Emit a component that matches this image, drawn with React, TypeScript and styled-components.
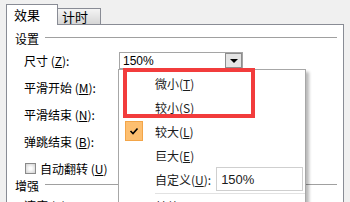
import React from 'react';
import styled, { createGlobalStyle } from 'styled-components';

const GlobalStyle = createGlobalStyle`
  html, body { margin: 0; padding: 0; background: #f0f0f0; }
  * { box-sizing: border-box; }
  body { font-family: "Noto Sans CJK SC", "Liberation Sans", sans-serif; }
`;

const Page = styled.div`
  position: relative;
  width: 350px;
  height: 202px;
  overflow: hidden;
  background: #f0f0f0;
  padding: 4px 6px 0 6px;
  display: flex;
  flex-direction: column;
  font-size: 12px;
  color: #000;
`;

const TabStrip = styled.div`
  display: flex;
  align-items: flex-end;
  height: 21px;
  position: relative;
  z-index: 1;
`;

const Tab = styled.div<{ $active?: boolean }>`
  display: flex;
  align-items: center;
  border: 1px solid #898c95;
  border-bottom: none;
  ${p => p.$active ? `
    width: 52px;
    height: 21px;
    padding: 0 0 2px 7px;
    background: #fff;
    font-size: 13px;
  ` : `
    width: 43px;
    height: 16px;
    margin-bottom: 1px;
    border-left: none;
    padding: 0 0 0 4px;
    background: linear-gradient(#f4f4f4, #d6d6d6);
    font-size: 13px;
  `}
`;

const Panel = styled.div`
  flex: 1;
  margin-top: -1px;
  background: #fff;
  border: 1px solid #898c95;
  border-bottom: none;
  display: flex;
  flex-direction: column;
`;

const GroupHeader = styled.div<{ $top: number }>`
  display: flex;
  align-items: center;
  height: 14px;
  margin-top: ${p => p.$top}px;
  padding: 0 6px 0 8px;
  font-size: 12px;

  &::after {
    content: '';
    flex: 1;
    height: 1px;
    margin: -2px 0 0 6px;
    background: #a0a0a0;
  }
`;

const Row = styled.div`
  display: flex;
  align-items: center;
  height: 27px;
  padding-left: 17px;
  flex-shrink: 0;
`;

const CheckRow = styled.div`
  display: flex;
  align-items: center;
  height: 23px;
  padding: 3px 0 0 18px;
  gap: 4px;
  flex-shrink: 0;
`;

const Label = styled.span`
  width: 95px;
  white-space: nowrap;
`;

const Key = styled.span`
  text-decoration: underline;
  text-underline-offset: 1px;
`;

const Combo = styled.div`
  display: flex;
  align-items: center;
  justify-content: space-between;
  width: 124px;
  height: 17px;
  border: 1px solid #a5a5a5;
  padding-left: 3px;
  font-family: "Liberation Sans", sans-serif;
  font-size: 12px;
`;

const ComboButton = styled.div`
  width: 17px;
  height: 15px;
  background: #e4e4e4;
  border: 1px solid #8d8d8d;
  display: flex;
  align-items: center;
  justify-content: center;

  &::before {
    content: '';
    border-left: 4px solid transparent;
    border-right: 4px solid transparent;
    border-top: 4px solid #000;
    margin-top: 1px;
  }
`;

const CheckBox = styled.span`
  width: 11px;
  height: 11px;
  border: 1px solid #8a8a8a;
  background: radial-gradient(circle, #fdfdfd 20%, #d0d0d0 100%);
`;

const Menu = styled.div`
  position: absolute;
  left: 118px;
  top: 69px;
  width: 188px;
  height: 150px;
  background: #fff;
  border: 1px solid #a7a7a7;
  box-shadow: 3px 3px 3px rgba(0, 0, 0, 0.28);
  padding-top: 1px;
  z-index: 2;
  font-size: 12px;
  color: #1c1c1c;
`;

const MenuItem = styled.div`
  display: flex;
  align-items: center;
  height: 24px;
  padding-left: 36px;
  position: relative;
`;

const CheckMark = styled.span`
  position: absolute;
  left: 6px;
  top: 2px;
  width: 18px;
  height: 20px;
  background: #fdbf70;
  border: 1px solid #f3a548;
  display: flex;
  align-items: center;
  justify-content: center;
`;

const SizeInput = styled.div`
  width: 87px;
  height: 24px;
  margin-left: 5px;
  border: 1px solid #cfcfcf;
  padding-left: 4px;
  display: flex;
  align-items: center;
  font-family: "Liberation Sans", sans-serif;
  font-size: 13px;
`;

const Separator = styled.div`
  height: 1px;
  margin: 2px 0 0 36px;
  background: #e2e2e2;
`;

const Highlight = styled.div`
  position: absolute;
  left: 123px;
  top: 68px;
  width: 132px;
  height: 50px;
  border: 4px solid #f23c3c;
  z-index: 3;
`;

const Check = () => (
  <svg width="10" height="8" viewBox="0 0 10 8">
    <path d="M1.5 4 L4 6.5 L8.5 1.5" fill="none" stroke="#000" strokeWidth="1.6" />
  </svg>
);

const labels: [string, string][] = [
  ['尺寸 (', 'Z'],
  ['平滑开始 (', 'M'],
  ['平滑结束 (', 'N'],
  ['弹跳结束 (', 'B'],
];

export default function App() {
  return (
    <>
      <GlobalStyle />
      <Page>
        <TabStrip>
          <Tab $active>效果</Tab>
          <Tab>计时</Tab>
        </TabStrip>
        <Panel>
          <GroupHeader $top={6}>设置</GroupHeader>
          <div style={{ height: 2 }} />
          {labels.map(([text, key], i) => (
            <Row key={key}>
              <Label>{text}<Key>{key}</Key>):</Label>
              {i === 0 && (
                <Combo>150%<ComboButton /></Combo>
              )}
            </Row>
          ))}
          <CheckRow>
            <CheckBox />
            <span>自动翻转 (<Key>U</Key>)</span>
          </CheckRow>
          <GroupHeader $top={0}>增强</GroupHeader>
          <Row>
            <Label>速度 (<Key>S</Key>):</Label>
          </Row>
        </Panel>

        <Menu>
          <MenuItem>微小(<Key>T</Key>)</MenuItem>
          <MenuItem>较小(<Key>S</Key>)</MenuItem>
          <MenuItem>
            <CheckMark><Check /></CheckMark>
            较大(<Key>L</Key>)
          </MenuItem>
          <MenuItem>巨大(<Key>E</Key>)</MenuItem>
          <MenuItem>
            自定义(<Key>U</Key>):
            <SizeInput>150%</SizeInput>
          </MenuItem>
          <Separator />
          <MenuItem>其他(<Key>O</Key>)</MenuItem>
        </Menu>
        <Highlight />
      </Page>
    </>
  );
}
